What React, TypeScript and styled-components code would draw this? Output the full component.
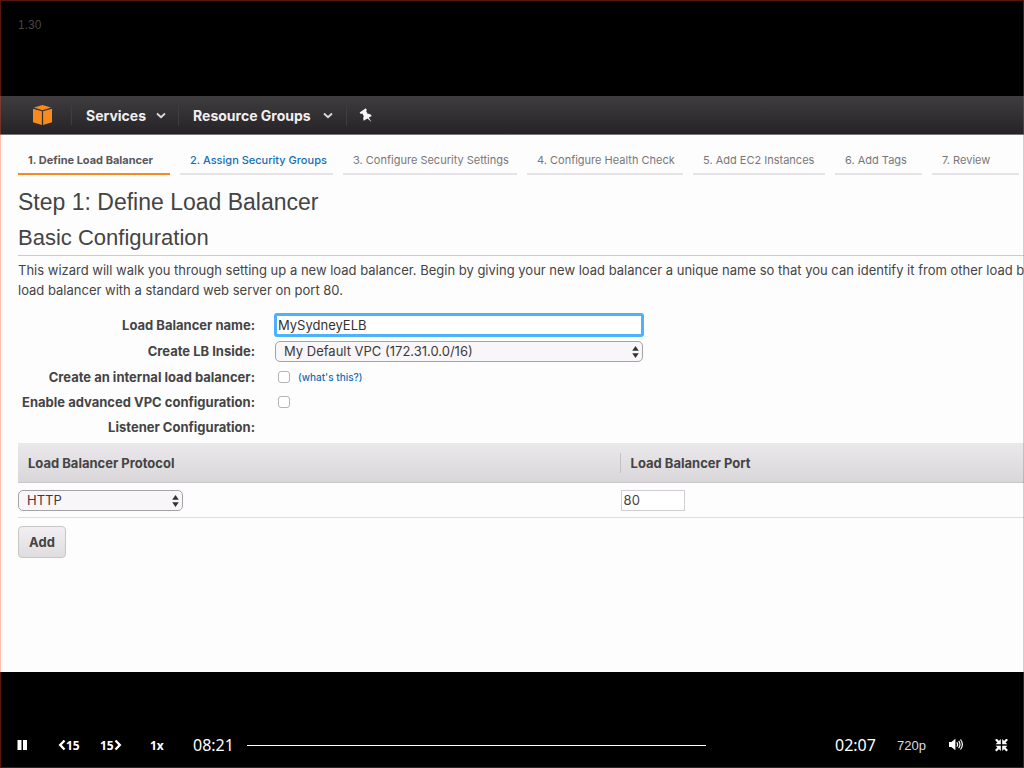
import React from "react";
import styled, { createGlobalStyle } from "styled-components";

const GlobalStyle = createGlobalStyle`
  *, *::before, *::after { box-sizing: border-box; }
  body {
    margin: 0;
    background: #000;
    font-family: "Liberation Sans", Arial, sans-serif;
  }
  button, input, select { font-family: inherit; margin: 0; }
`;

const Player = styled.div`
  position: relative;
  display: flex;
  flex-direction: column;
  min-height: 100vh;
  overflow: hidden;
  background: #000;

  &::after {
    content: "";
    position: absolute;
    inset: 0;
    border: 1px solid rgba(255, 70, 30, 0.34);
    pointer-events: none;
  }
`;

const TopBand = styled.header`
  flex: 1 0 64px;
  padding: 17px 18px 0;
  color: #464646;
  font-size: 12px;
  line-height: 16px;
`;

const Scene = styled.main`
  aspect-ratio: 16 / 9;
  overflow: hidden;
  background: #fefdfe;
  color: #444;
  font-family: Inter, "Liberation Sans", sans-serif;
`;

const Nav = styled.nav`
  display: flex;
  align-items: center;
  height: 39px;
  padding-left: 32px;
  background: linear-gradient(#403d40, #252325);
  border-bottom: 1px solid #777;
`;

const NavButton = styled.button<{ $gap?: number; $lead?: number; $space: number }>`
  display: flex;
  align-items: center;
  gap: ${(p) => p.$gap ?? 0}px;
  height: 20px;
  padding: 0 ${(p) => p.$space}px 0 ${(p) => p.$lead ?? 14}px;
  border: 0;
  border-left: 1px solid #403d40;
  background: none;
  color: #f2eff2;
  font-size: 14px;
  font-weight: 700;
  white-space: nowrap;
`;

const HomeLink = styled.a`
  display: flex;
  width: 39px;
`;

const Tabs = styled.ol`
  display: grid;
  grid-template-columns: 152fr 153fr 174fr 156fr 132fr 87fr 87fr;
  gap: 10px;
  margin: 0 5px 0 18px;
  padding: 0;
  list-style: none;
`;

const Tab = styled.li<{ $active?: boolean }>`
  min-width: 0;
  height: 40px;
  padding: 15px 0 0 10px;
  border-bottom: 2px solid ${(p) => (p.$active ? "#f78b1f" : "#e6e3e6")};
  color: ${(p) => (p.$active ? "#5a575a" : "#777")};
  font-size: 11px;
  font-weight: ${(p) => (p.$active ? 700 : 400)};
  line-height: 20px;
  white-space: nowrap;
`;

const TextLink = styled.a<{ $small?: boolean }>`
  color: #146eb4;
  font-size: ${(p) => (p.$small ? 10 : 11)}px;
  font-weight: 500;
  text-decoration: none;
`;

const Page = styled.div`
  padding: 12px 0 0 18px;
`;

const Title = styled.h1`
  margin: 0;
  font-family: "Liberation Sans", Arial, sans-serif;
  font-size: 23px;
  font-weight: 400;
  line-height: 30px;
`;

const Subtitle = styled.h2`
  margin: 6px 0 0;
  padding-bottom: 2px;
  border-bottom: 1px solid #ccc;
  font-family: "Liberation Sans", Arial, sans-serif;
  font-size: 22px;
  font-weight: 400;
  line-height: 30px;
`;

const Intro = styled.p`
  margin: 4px 0 12px;
  font-size: 13px;
  line-height: 20px;
  white-space: nowrap;
`;

const Form = styled.div`
  display: grid;
  grid-template-columns: 237px 370px;
  grid-template-rows: 26px 26px;
  grid-auto-rows: 25px;
  column-gap: 19px;
  align-items: center;
  margin-bottom: 4px;
`;

const Label = styled.label`
  justify-self: end;
  font-size: 13px;
  font-weight: 700;
  white-space: nowrap;
`;

const NameInput = styled.input`
  width: 100%;
  height: 24px;
  padding: 0 1px;
  border: 3px solid #4db1fb;
  border-radius: 3px;
  background: #fff;
  color: #333;
  font-size: 13px;
  outline: 0;
`;

const Field = styled.div`
  display: flex;
  align-items: center;
  gap: 8px;
`;

const SelectWrap = styled.div<{ $wide?: boolean }>`
  position: relative;
  width: ${(p) => (p.$wide ? "368px" : "165px")};
  margin-left: ${(p) => (p.$wide ? 1 : 0)}px;

  svg {
    position: absolute;
    top: 5px;
    right: 4px;
    pointer-events: none;
  }
`;

const Select = styled.select`
  display: block;
  width: 100%;
  height: 21px;
  padding: 0 20px 0 8px;
  appearance: none;
  border: 1px solid #a5a2a5;
  border-radius: 5px;
  background: #f9f6f9;
  color: #3c3a3c;
  font-size: 13px;
`;

const Check = styled.input`
  width: 12px;
  height: 12px;
  margin-left: 4px;
  appearance: none;
  border: 1px solid #b5b2b5;
  border-radius: 3px;
  background: #fff;
`;

const Table = styled.table`
  width: 100%;
  border-collapse: separate;
  border-spacing: 0;
  table-layout: fixed;
`;

const HeadCell = styled.th`
  width: 60%;
  height: 40px;
  padding: 0;
  background: linear-gradient(#ebe8eb, #dad7da);
  border-bottom: 1px solid #c9c6c9;
  font-size: 13px;
  font-weight: 700;
  text-align: left;

  &:last-child { width: 40%; }

  span {
    display: block;
    padding-left: 10px;
    line-height: 20px;
  }

  &:last-child span {
    margin-left: -2px;
    border-left: 1px solid #c4c1c4;
  }
`;

const Cell = styled.td`
  height: 35px;
  padding: 0;
  border-bottom: 1px solid #ddd;
`;

const PortInput = styled.input`
  display: block;
  width: 64px;
  height: 21px;
  margin-left: -1px;
  padding: 0 2px;
  border: 1px solid #d0cdd0;
  background: #fff;
  color: #444;
  font-size: 13px;
`;

const AddButton = styled.button`
  width: 48px;
  height: 32px;
  margin-top: 8px;
  padding: 0;
  border: 1px solid #c8c5c8;
  border-radius: 4px;
  background: linear-gradient(#f2eff2, #e0dde0);
  color: #444;
  font-size: 13px;
  font-weight: 700;
`;

const Controls = styled.footer`
  display: flex;
  flex: 1 0 64px;
  align-items: flex-end;
  padding: 0 15px 12px 16px;
  color: #fff;
`;

const Control = styled.button<{ $width: number; $plain?: boolean }>`
  display: flex;
  flex: none;
  align-items: center;
  width: ${(p) => p.$width}px;
  height: 22px;
  padding: 0;
  border: 0;
  background: none;
  color: ${(p) => (p.$plain ? "#ddd" : "#fff")};
  font-family: ${(p) => (p.$plain ? '"Liberation Sans", sans-serif' : '"Open Sans", sans-serif')};
  font-size: ${(p) => (p.$plain ? 13 : 12)}px;
  font-weight: ${(p) => (p.$plain ? 400 : 700)};
`;

const Time = styled.time<{ $width: number }>`
  flex: none;
  width: ${(p) => p.$width}px;
  font-family: "Noto Sans", sans-serif;
  font-size: 16px;
  line-height: 22px;
`;

const Seek = styled.input`
  flex: 1;
  min-width: 60px;
  height: 22px;
  margin-right: 129px;
  appearance: none;
  background: none;

  &::-webkit-slider-runnable-track { height: 1px; background: #fff; }
  &::-webkit-slider-thumb { appearance: none; width: 1px; height: 1px; background: #fff; }
`;

const Cube = () => (
  <svg width="21" height="22" viewBox="0 0 21 22" fill="#f98a1d" aria-hidden="true">
    <path d="M10.5 1 19 3.6 10.5 6.3 2 3.6Z" />
    <path d="M1 4.7 9.9 7.3V21L1 18.2Z" />
    <path d="M20 4.7 11.1 7.3V21L20 18.2Z" />
  </svg>
);

const Caret = () => (
  <svg width="10" height="8" viewBox="0 0 10 8" fill="none" stroke="#dedbde" strokeWidth="1.8" aria-hidden="true">
    <path d="M1 2.5 5 6.2 9 2.5" />
  </svg>
);

const Pin = () => (
  <svg width="14" height="14" viewBox="0 0 14 14" fill="#f8f5f8" aria-hidden="true">
    <path d="M.6 4.4 6.8.2 7.9 2 7.1 3.1 8.8 5.9Q11.4 5.6 12.8 8L9.8 9.6 12.4 14 8.5 10.5 4.6 12.7Q3.4 10.4 4.8 8.3L3.3 5.6 1.8 6Z" />
  </svg>
);

const Arrows = () => (
  <svg width="7" height="12" viewBox="0 0 7 12" fill="#333" aria-hidden="true">
    <path d="M3.5 0 6.8 4.8H.2ZM3.5 12 .2 7.2h6.6Z" />
  </svg>
);

const Pause = () => (
  <svg width="12" height="11" viewBox="0 0 12 11" fill="#fff" aria-hidden="true">
    <path d="M1.5 0h4v10h-4ZM7 0h4v10H7Z" />
  </svg>
);

const Angle = ({ back }: { back?: boolean }) => (
  <svg width="8" height="12" viewBox="0 0 8 12" fill="none" stroke="#fff" strokeWidth="2.4" aria-hidden="true">
    <path d={back ? "M6.5 1.5 2.2 6l4.3 4.5" : "M1.5 1.5 5.8 6l-4.3 4.5"} />
  </svg>
);

const Volume = () => (
  <svg width="16" height="14" viewBox="0 0 16 14" fill="none" stroke="#fff" strokeWidth="1.2" aria-hidden="true">
    <path d="M1 4h2.4L7.4.8v11.4L3.4 9H1Z" fill="#fff" stroke="none" />
    <path d="M8.8 4.3q1.6 2.2 0 4.4M10.7 2.9q2.6 3.6 0 7.2M12.5 1.5q3.8 5 0 10" />
  </svg>
);

const Shrink = () => (
  <svg width="13" height="13" viewBox="0 0 13 13" fill="#fff" stroke="#fff" aria-hidden="true">
    <path d="M.8.3 4 3.5M12.2.3 9 3.5M.8 11.7 4 8.5M12.2 11.7 9 8.5" strokeWidth="2.2" />
    <path d="M5.8.1v5.2H.6ZM7.2.1v5.2h5.2ZM5.8 11.9V6.7H.6ZM7.2 11.9V6.7h5.2Z" stroke="none" />
  </svg>
);

export default function App() {
  return (
    <Player>
      <GlobalStyle />
      <TopBand>1.30</TopBand>
      <Scene>
        <Nav>
          <HomeLink href="#" aria-label="Home"><Cube /></HomeLink>
          <NavButton $gap={10} $space={12}>Services <Caret /></NavButton>
          <NavButton $gap={12} $space={13}>Resource Groups <Caret /></NavButton>
          <NavButton $lead={12} $space={10} aria-label="Pin"><Pin /></NavButton>
        </Nav>
        <Tabs>
          <Tab $active>1. Define Load Balancer</Tab>
          <Tab><TextLink href="#">2. Assign Security Groups</TextLink></Tab>
          <Tab>3. Configure Security Settings</Tab>
          <Tab>4. Configure Health Check</Tab>
          <Tab>5. Add EC2 Instances</Tab>
          <Tab>6. Add Tags</Tab>
          <Tab>7. Review</Tab>
        </Tabs>
        <Page>
          <Title>Step 1: Define Load Balancer</Title>
          <Subtitle>Basic Configuration</Subtitle>
          <Intro>
            This wizard will walk you through setting up a new load balancer. Begin by giving your new load balancer a unique name so that you can identify it from other load bala
            <br />
            load balancer with a standard web server on port 80.
          </Intro>
          <Form>
            <Label htmlFor="name">Load Balancer name:</Label>
            <NameInput id="name" defaultValue="MySydneyELB" />
            <Label htmlFor="vpc">Create LB Inside:</Label>
            <SelectWrap $wide>
              <Select id="vpc"><option>My Default VPC (172.31.0.0/16)</option></Select>
              <Arrows />
            </SelectWrap>
            <Label htmlFor="internal">Create an internal load balancer:</Label>
            <Field>
              <Check id="internal" type="checkbox" />
              <TextLink href="#" $small>(what's this?)</TextLink>
            </Field>
            <Label htmlFor="advanced">Enable advanced VPC configuration:</Label>
            <Field><Check id="advanced" type="checkbox" /></Field>
            <Label as="span">Listener Configuration:</Label>
          </Form>
          <Table>
            <thead>
              <tr>
                <HeadCell><span>Load Balancer Protocol</span></HeadCell>
                <HeadCell><span>Load Balancer Port</span></HeadCell>
              </tr>
            </thead>
            <tbody>
              <tr>
                <Cell>
                  <SelectWrap>
                    <Select aria-label="Load Balancer Protocol"><option>HTTP</option></Select>
                    <Arrows />
                  </SelectWrap>
                </Cell>
                <Cell><PortInput aria-label="Load Balancer Port" defaultValue="80" /></Cell>
              </tr>
            </tbody>
          </Table>
          <AddButton>Add</AddButton>
        </Page>
      </Scene>
      <Controls>
        <Control $width={42} aria-label="Pause"><Pause /></Control>
        <Control $width={42} aria-label="Back 15 seconds"><Angle back />15</Control>
        <Control $width={50} aria-label="Forward 15 seconds">15<Angle /></Control>
        <Control $width={43}>1x</Control>
        <Time $width={54}>08:21</Time>
        <Seek type="range" aria-label="Seek" defaultValue={80} />
        <Time $width={62}>02:07</Time>
        <Control $width={51} $plain>720p</Control>
        <Control $width={47} aria-label="Volume"><Volume /></Control>
        <Control $width={14} aria-label="Exit full screen"><Shrink /></Control>
      </Controls>
    </Player>
  );
}
